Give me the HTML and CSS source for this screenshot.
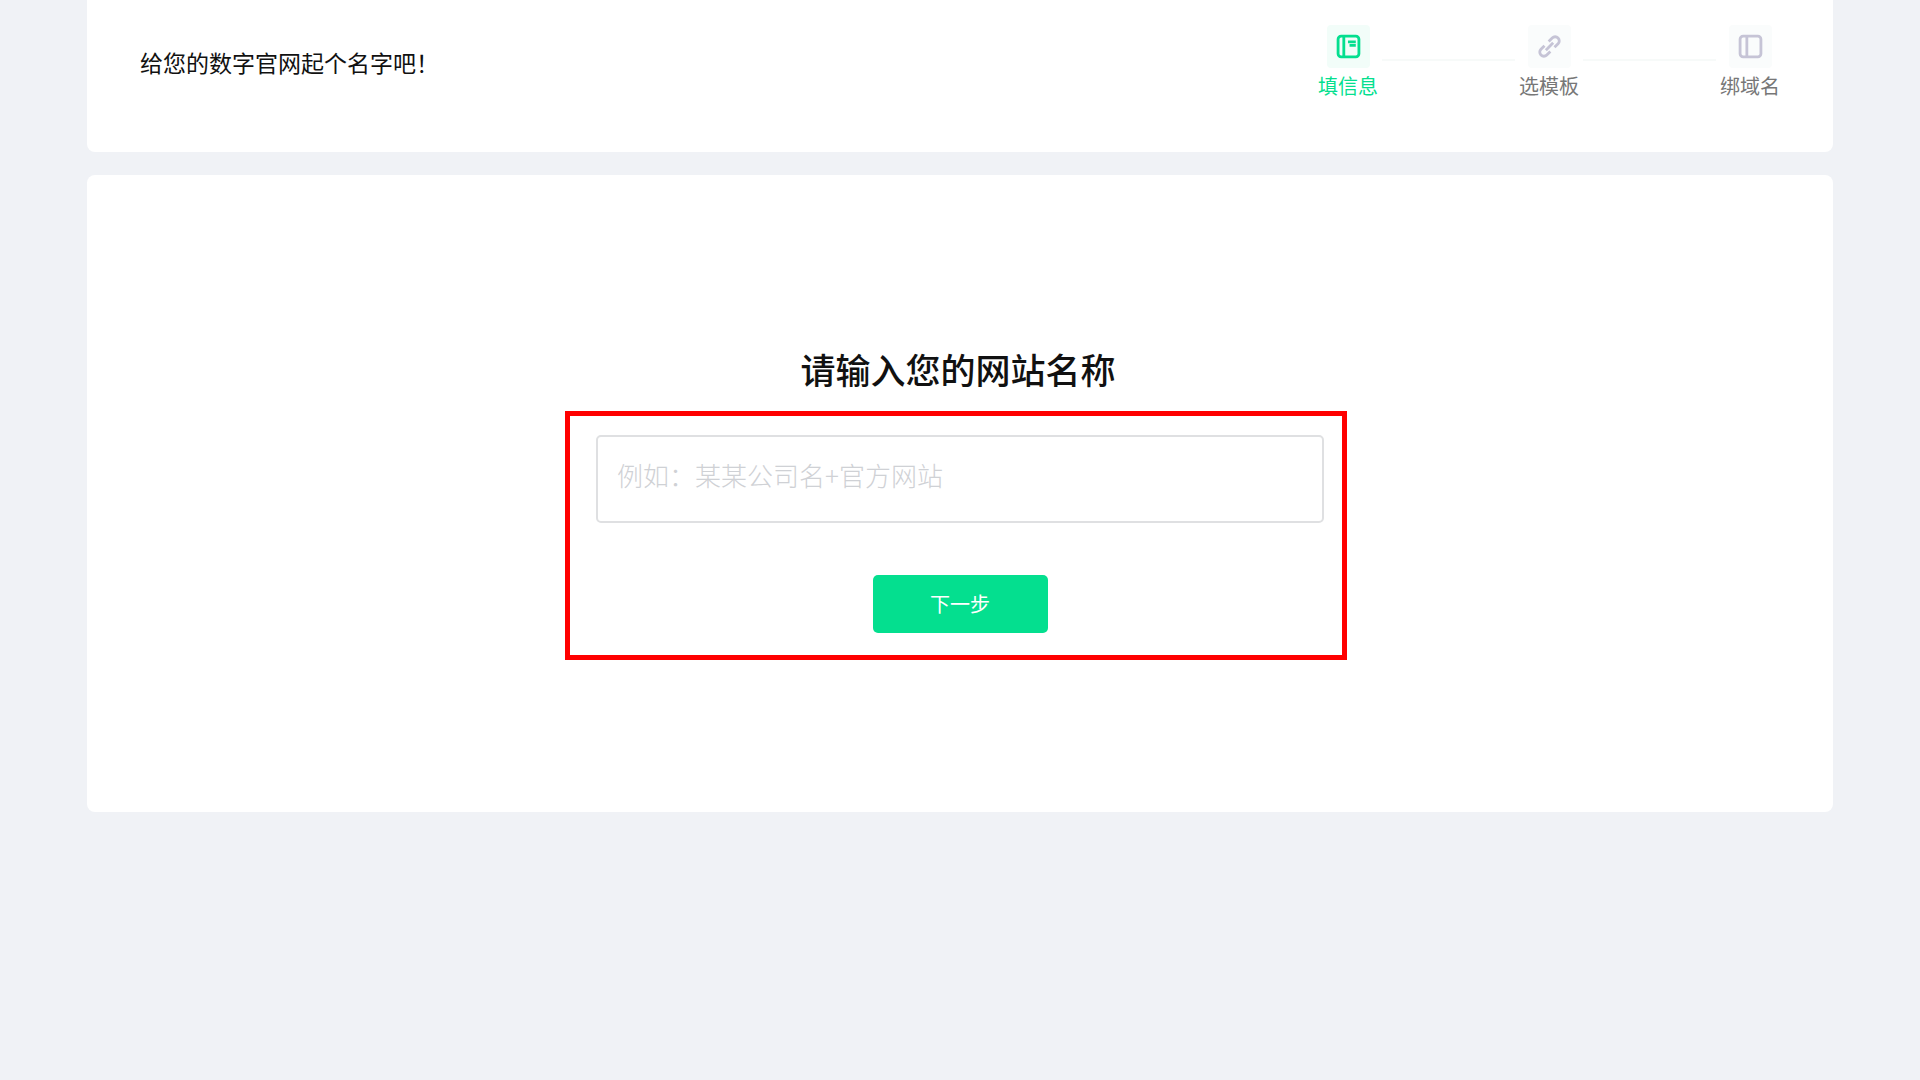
FILE: index.html
```html
<!DOCTYPE html>
<html lang="zh-CN">
<head>
  <meta charset="utf-8">
  <meta name="viewport" content="width=device-width, initial-scale=1">
  <title>请输入您的网站名称</title>
  <link rel="stylesheet" href="styles.css">
</head>
<body>
  <header class="card top">
    <p class="intro">给您的数字官网起个名字吧！</p>
    <ol class="steps">
      <li class="step active">
        <span class="step-icon">
          <svg viewBox="0 0 24 24" aria-hidden="true">
            <rect x="2" y="2" width="20" height="20" rx="3"/>
            <path d="M7.5 2v20M11.5 7.5h7.5M13 11h6"/>
          </svg>
        </span>
        <span>填信息</span>
      </li>
      <li class="line" aria-hidden="true"></li>
      <li class="step">
        <span class="step-icon">
          <svg viewBox="0 0 24 24" aria-hidden="true">
            <path d="M8.5 15.5l7-7M11.2 7.2l3.4-3.4a3.9 3.9 0 0 1 5.6 5.6l-3.4 3.4M12.8 16.8l-3.4 3.4a3.9 3.9 0 0 1-5.6-5.6l3.4-3.4"/>
          </svg>
        </span>
        <span>选模板</span>
      </li>
      <li class="line" aria-hidden="true"></li>
      <li class="step">
        <span class="step-icon">
          <svg viewBox="0 0 24 24" aria-hidden="true">
            <rect x="2" y="2" width="20" height="20" rx="3"/>
            <path d="M8.5 2v20"/>
          </svg>
        </span>
        <span>绑域名</span>
      </li>
    </ol>
  </header>
  <main class="card main">
    <h1 class="title"><label for="site-name">请输入您的网站名称</label></h1>
    <form class="form">
      <input class="name" id="site-name" type="text" placeholder="例如：某某公司名+官方网站">
      <button class="next" type="button">下一步</button>
      <div class="highlight"></div>
    </form>
  </main>
</body>
</html>
```
FILE: styles.css
```css
* {
  box-sizing: border-box;
}

body {
  margin: 0;
  padding: 0 87px;
  background: #f0f2f6;
  color: #111;
  font-family: "Noto Sans CJK SC", sans-serif;
}

.card {
  background: #fff;
  border-radius: 8px;
}

.top {
  display: flex;
  justify-content: space-between;
  align-items: flex-start;
  padding: 25px 53px 52px;
  border-radius: 0 0 8px 8px;
}

.intro {
  margin: 19px 0 0;
  font-size: 23px;
  line-height: 36px;
}

.steps {
  display: flex;
  gap: 4px;
  margin: 0;
  padding: 0;
  list-style: none;
}

.step {
  display: flex;
  flex-direction: column;
  align-items: center;
  gap: 4px;
  color: #777;
  font-size: 20px;
  line-height: 28px;
}

.step-icon {
  display: flex;
  align-items: center;
  justify-content: center;
  width: 43px;
  height: 43px;
  border-radius: 4px;
  background: #fafcfc;
  color: #c6c4d6;
}

.step-icon svg {
  width: 25px;
  height: 25px;
  fill: none;
  stroke: currentColor;
  stroke-width: 2.7;
}

.active {
  color: #04df8f;
}

.active .step-icon {
  background: #f2fdf9;
  color: #04df8f;
}

.line {
  width: 133px;
  height: 2px;
  margin-top: 34px;
  background: #f7faf9;
}

.main {
  margin-top: 23px;
  padding: 168px 24px 179px;
}

.title {
  margin: 0 0 40px;
  padding-right: 4px;
  font-size: 35px;
  font-weight: 500;
  line-height: 52px;
  text-align: center;
}

.form {
  position: relative;
  display: flex;
  flex-direction: column;
  align-items: center;
  gap: 52px;
  max-width: 728px;
  margin: 0 auto;
}

.name {
  width: 100%;
  height: 88px;
  padding: 0 19px 10px;
  border: 2px solid #dfe0e2;
  border-radius: 5px;
  background: #fff;
  color: #111;
  font-family: inherit;
  font-size: 26px;
  font-weight: 300;
}

.name::placeholder {
  color: #cfd1d5;
  opacity: 1;
}

.next {
  width: 175px;
  height: 58px;
  padding: 0;
  border: 0;
  border-radius: 5px;
  background: #04df8f;
  color: #fff;
  font-family: inherit;
  font-size: 20px;
  line-height: 28px;
}

/* Red frame around the field and the button */
.highlight {
  position: absolute;
  inset: -24px -23px -27px -31px;
  border: 5px solid #f00;
  pointer-events: none;
}
```
